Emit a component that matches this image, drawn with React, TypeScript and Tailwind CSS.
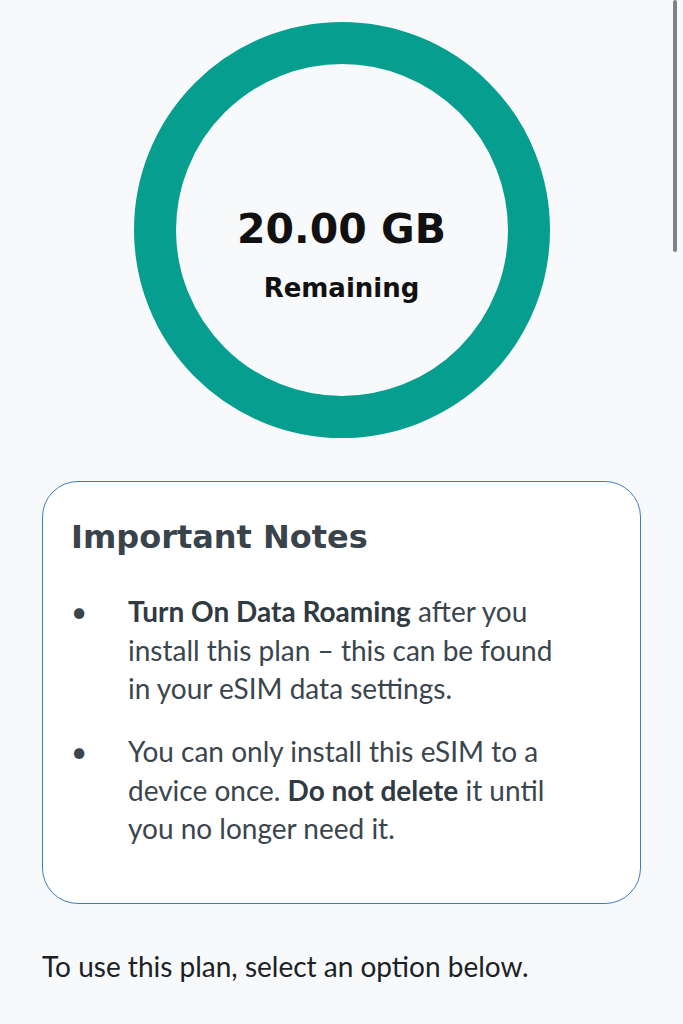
import React from "react";

const App = () => {
  return (
    <div className="relative min-h-[1024px] bg-[#f8f9fb] px-[42px] pt-[22px] font-['Lato',sans-serif]">
      <div className="flex justify-center">
        <div className="flex h-[416px] w-[416px] flex-col items-center rounded-full border-[42px] border-[#069e8f] bg-[#f8f9fb] pt-[141px] font-['DejaVu_Sans',sans-serif] text-[#111]">
          <div className="text-[41px] leading-[48px] font-bold">20.00 GB</div>
          <div className="mt-[19px] text-[26px] leading-[32px] font-bold">Remaining</div>
        </div>
      </div>

      <div className="mt-[43px] rounded-[36px] border-[1.5px] border-[#3b7dbd] bg-white pt-[35px] pr-[30px] pb-[55px] pl-[28px]">
        <h2 className="font-['DejaVu_Sans',sans-serif] text-[32px] leading-[40px] font-bold text-[#38434b]">
          Important Notes
        </h2>
        <ul className="mt-[35px] flex flex-col gap-[24.5px] text-[28px] leading-[38.5px] text-[#3b454e]">
          <li className="flex">
            <span className="w-[57px] shrink-0">•</span>
            <span className="max-w-[440px]">
              <b className="font-bold text-[#2f3a42]">Turn On Data Roaming</b> after you install
              this plan – this can be found in your eSIM data settings.
            </span>
          </li>
          <li className="flex">
            <span className="w-[57px] shrink-0">•</span>
            <span className="max-w-[440px]">
              You can only install this eSIM to a device once.{" "}
              <b className="font-bold text-[#2f3a42]">Do not delete</b> it until you no longer need
              it.
            </span>
          </li>
        </ul>
      </div>

      <p className="mt-[46px] text-[28px] leading-[32px] text-[#1c2126]">
        To use this plan, select an option below.
      </p>

      <div className="absolute top-0 right-[6px] h-[252px] w-[4px] rounded-full bg-[#7f8282]" />
    </div>
  );
};

export default App;
